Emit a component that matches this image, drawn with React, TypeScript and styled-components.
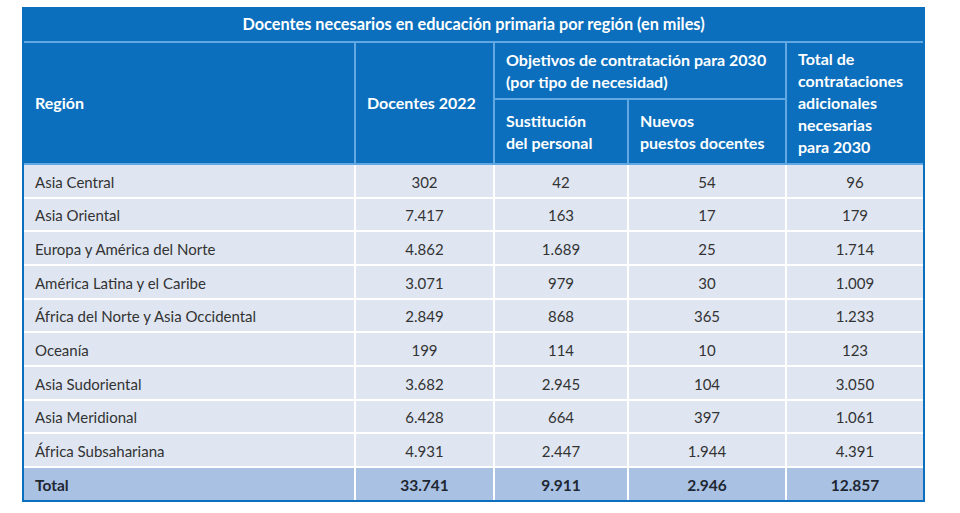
import React from "react";
import styled, { createGlobalStyle } from "styled-components";

const GlobalStyle = createGlobalStyle`
  html, body { margin: 0; padding: 0; background: #ffffff; }
  body { font-family: Lato, "Open Sans", sans-serif; }
`;

const BLUE = "#0b6fbd";
const LINE = "#62a8e2";
const BODY_BG = "#dfe6f2";
const TOTAL_BG = "#a9c2e4";

const Page = styled.div`
  padding: 7px 0 0 22px;
`;

const Table = styled.table`
  width: 903px;
  border-collapse: separate;
  border-spacing: 0;
  border: 2px solid ${BLUE};
  border-top: 0;
  table-layout: fixed;
  font-family: Lato, "Open Sans", sans-serif;
  font-size: 15px;
`;

const TitleCell = styled.th`
  background: ${BLUE};
  color: #ffffff;
  font-weight: 700;
  font-size: 16.3px;
  height: 33px;
  padding: 0 0 1px;
  text-align: center;
  border-bottom: 2px solid ${LINE};
`;

const HeadCell = styled.th<{ $last?: boolean; $h?: number }>`
  background: ${BLUE};
  color: #ffffff;
  font-weight: 700;
  font-size: 16px;
  text-align: left;
  vertical-align: middle;
  line-height: 22px;
  padding: 0 4px 0 11px;
  white-space: nowrap;
  height: ${(p) => (p.$h ? `${p.$h}px` : "auto")};
  border-right: ${(p) => (p.$last ? "0" : `2px solid ${LINE}`)};
  border-bottom: 2px solid ${LINE};
`;

const Cell = styled.td<{ $total?: boolean; $first?: boolean; $last?: boolean }>`
  background: ${(p) => (p.$total ? TOTAL_BG : BODY_BG)};
  color: ${(p) => (p.$total ? "#1f2733" : "#333333")};
  font-weight: ${(p) => (p.$total ? 700 : 400)};
  font-size: ${(p) => (p.$total ? "15.5px" : "15px")};
  text-align: ${(p) => (p.$first ? "left" : "center")};
  padding: 2px 0 0 ${(p) => (p.$first ? "11px" : "0")};
  height: ${(p) => (p.$total ? "30px" : "29.67px")};
  border-right: ${(p) => (p.$last ? "0" : "2px solid #ffffff")};
  border-bottom: ${(p) => (p.$total ? "0" : "2px solid #ffffff")};
`;

type Row = [string, string, string, string, string];

const rows: Row[] = [
  ["Asia Central", "302", "42", "54", "96"],
  ["Asia Oriental", "7.417", "163", "17", "179"],
  ["Europa y América del Norte", "4.862", "1.689", "25", "1.714"],
  ["América Latina y el Caribe", "3.071", "979", "30", "1.009"],
  ["África del Norte y Asia Occidental", "2.849", "868", "365", "1.233"],
  ["Oceanía", "199", "114", "10", "123"],
  ["Asia Sudoriental", "3.682", "2.945", "104", "3.050"],
  ["Asia Meridional", "6.428", "664", "397", "1.061"],
  ["África Subsahariana", "4.931", "2.447", "1.944", "4.391"],
];

const total: Row = ["Total", "33.741", "9.911", "2.946", "12.857"];

const DataRow = ({ row, isTotal }: { row: Row; isTotal?: boolean }) => (
  <tr>
    {row.map((v, i) => (
      <Cell key={i} $first={i === 0} $last={i === 4} $total={isTotal}>
        {v}
      </Cell>
    ))}
  </tr>
);

export default function App() {
  return (
    <>
      <GlobalStyle />
      <Page>
        <Table>
          <colgroup>
            <col style={{ width: 332 }} />
            <col style={{ width: 139 }} />
            <col style={{ width: 134 }} />
            <col style={{ width: 158 }} />
            <col style={{ width: 136 }} />
          </colgroup>
          <thead>
            <tr>
              <TitleCell colSpan={5}>
                Docentes necesarios en educación primaria por región (en miles)
              </TitleCell>
            </tr>
            <tr>
              <HeadCell rowSpan={2}>Región</HeadCell>
              <HeadCell rowSpan={2}>Docentes 2022</HeadCell>
              <HeadCell colSpan={2} $h={55}>
                Objetivos de contratación para 2030
                <br />
                (por tipo de necesidad)
              </HeadCell>
              <HeadCell rowSpan={2} $last>
                Total de
                <br />
                contrataciones
                <br />
                adicionales
                <br />
                necesarias
                <br />
                para 2030
              </HeadCell>
            </tr>
            <tr>
              <HeadCell $h={63}>
                Sustitución
                <br />
                del personal
              </HeadCell>
              <HeadCell>
                Nuevos
                <br />
                puestos docentes
              </HeadCell>
            </tr>
          </thead>
          <tbody>
            {rows.map((r) => (
              <DataRow key={r[0]} row={r} />
            ))}
            <DataRow row={total} isTotal />
          </tbody>
        </Table>
      </Page>
    </>
  );
}
